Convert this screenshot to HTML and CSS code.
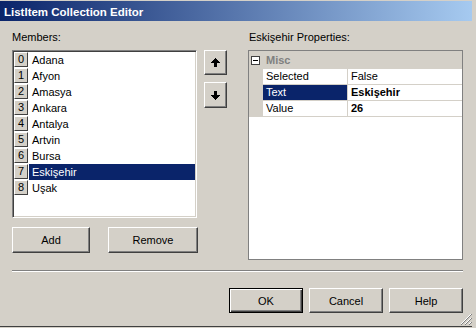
FILE: index.html
```html
<!DOCTYPE html>
<html lang="tr">
  <head>
    <meta charset="UTF-8" />
    <title>ListItem Collection Editor</title>
    <link rel="stylesheet" href="styles.css">
  </head>
  <body>
    <div class="window">
      <div class="titlebar">ListItem Collection Editor</div>
      <div class="content">
        <div class="panes">
          <div class="members">
            <div class="label">Members:</div>
            <div class="listbox">
              <div class="item"><span class="index">0</span><span class="name">Adana</span></div>
              <div class="item"><span class="index">1</span><span class="name">Afyon</span></div>
              <div class="item"><span class="index">2</span><span class="name">Amasya</span></div>
              <div class="item"><span class="index">3</span><span class="name">Ankara</span></div>
              <div class="item"><span class="index">4</span><span class="name">Antalya</span></div>
              <div class="item"><span class="index">5</span><span class="name">Artvin</span></div>
              <div class="item"><span class="index">6</span><span class="name">Bursa</span></div>
              <div class="item selected"><span class="index">7</span><span class="name">Eskişehir</span></div>
              <div class="item"><span class="index">8</span><span class="name">Uşak</span></div>
            </div>
            <div class="member-buttons">
              <button class="btn btn-add">Add</button>
              <button class="btn btn-remove">Remove</button>
            </div>
          </div>

          <div class="arrows">
            <button class="btn btn-arrow">
              <svg width="9" height="9" viewBox="0 0 9 9" shape-rendering="crispEdges"><path d="M4 0h1v1h1v1h1v1h1v1h1v1H6v4H3V5H0V4h1V3h1V2h1V1h1z" fill="#000"/></svg>
            </button>
            <button class="btn btn-arrow btn-down">
              <svg width="9" height="9" viewBox="0 0 9 9" shape-rendering="crispEdges"><path d="M3 0h3v4h3v1H8v1H7v1H6v1H5v1H4V8H3V7H2V6H1V5H0V4h3z" fill="#000"/></svg>
            </button>
          </div>

          <div class="properties">
            <div class="label">Eskişehir Properties:</div>
            <div class="grid">
              <div class="category">
                <svg class="toggle" width="9" height="9" viewBox="0 0 9 9" shape-rendering="crispEdges"><rect x="0.5" y="0.5" width="8" height="8" fill="#fff" stroke="#404040"/><path d="M2 4h5v1H2z" fill="#000"/></svg>
                Misc
              </div>
              <div class="prop"><span class="pname">Selected</span><span class="pvalue">False</span></div>
              <div class="prop selected"><span class="pname">Text</span><span class="pvalue bold">Eskişehir</span></div>
              <div class="prop"><span class="pname">Value</span><span class="pvalue bold">26</span></div>
            </div>
          </div>
        </div>

        <div class="separator"></div>

        <div class="footer">
          <button class="btn btn-dialog btn-default">OK</button>
          <button class="btn btn-dialog">Cancel</button>
          <button class="btn btn-dialog">Help</button>
        </div>
      </div>

      <svg class="grip" width="12" height="12" viewBox="0 0 12 12" shape-rendering="crispEdges">
        <path d="M11 1L1 11M11 5L5 11M11 9L9 11" stroke="#fff" stroke-width="1"/>
        <path d="M12 1L1 12M12 5L5 12M12 9L9 12" stroke="#808080" stroke-width="1.4"/>
      </svg>
    </div>
  </body>
</html>
```

FILE: styles.css
```css
* {
  box-sizing: border-box;
}
body {
  margin: 0;
  background-color: #d4d0c8;
  font-family: "Liberation Sans", Arial, sans-serif;
  font-size: 11px;
  color: #000;
}
.window {
  position: relative;
  width: 472px;
  height: 327px;
  border-top: 1px solid #d4d0c8;
  border-bottom: 1px solid #404040;
}
.titlebar {
  height: 20px;
  padding: 2px 0 0 4px;
  line-height: 18px;
  font-weight: bold;
  font-size: 11.5px;
  color: #fff;
  background: linear-gradient(to right, #0a246a, #a6caf0);
}
.content {
  padding: 10px 9px 0 12px;
}
.panes {
  display: flex;
  align-items: flex-start;
}
.members {
  width: 186px;
}
.label {
  height: 13px;
  line-height: 13px;
  margin-bottom: 6px;
}
.listbox {
  width: 185px;
  height: 168px;
  padding: 1px;
  background-color: #fff;
  border: 1px solid;
  border-color: #808080 #fff #fff #808080;
  box-shadow: inset 1px 1px #404040, inset -1px -1px #d4d0c8;
}
.item {
  display: flex;
  height: 16px;
}
.index {
  width: 14px;
  height: 15px;
  line-height: 13px;
  text-align: center;
  background-color: #d4d0c8;
  border: 1px solid;
  border-color: #fff #404040 #404040 #fff;
}
.item .name {
  flex: 1;
  margin-left: 1px;
  padding-left: 3px;
  line-height: 16px;
}
.item.selected .name {
  background-color: #0a246a;
  color: #fff;
}
.member-buttons {
  display: flex;
  justify-content: space-between;
  margin-top: 9px;
}
.btn {
  height: 26px;
  padding: 0;
  font: inherit;
  color: #000;
  background-color: #d4d0c8;
  border: 1px solid;
  border-color: #fff #404040 #404040 #fff;
  box-shadow: inset -1px -1px #808080;
}
.btn-add {
  width: 78px;
}
.btn-remove {
  width: 90px;
}
.arrows {
  display: flex;
  flex-direction: column;
  gap: 7px;
  margin-left: 6px;
  padding-top: 19px;
}
.btn-arrow {
  width: 23px;
  height: 25px;
  display: flex;
  align-items: center;
  justify-content: center;
}
.btn-down {
  height: 26px;
}
.properties {
  width: 215px;
  margin-left: 21px;
}
.properties .label {
  padding-left: 1px;
}
.grid {
  height: 210px;
  background-color: #fff;
  border: 1px solid #808080;
}
.category {
  display: flex;
  align-items: center;
  height: 18px;
  background-color: #d4d0c8;
  color: #808080;
  font-weight: bold;
}
.toggle {
  margin: 0 6px 0 2px;
}
.prop {
  display: flex;
  height: 16px;
  padding-left: 14px;
  background-color: #d4d0c8;
}
.pname,
.pvalue {
  line-height: 15px;
  padding-left: 3px;
  background-color: #fff;
  border-bottom: 1px solid #d4d0c8;
}
.pname {
  width: 85px;
  border-right: 1px solid #d4d0c8;
}
.pvalue {
  flex: 1;
}
.prop.selected .pname {
  background-color: #0a246a;
  color: #fff;
}
.bold {
  font-weight: bold;
}
.separator {
  height: 2px;
  margin-top: 10px;
  border-top: 1px solid #808080;
  border-bottom: 1px solid #fff;
}
.footer {
  display: flex;
  justify-content: flex-end;
  gap: 6px;
  margin-top: 16px;
}
.btn-dialog {
  width: 74px;
  height: 25px;
}
.btn-default {
  border: 1px solid #000;
  box-shadow: inset 1px 1px #fff, inset -1px -1px #404040, inset -2px -2px #808080;
}
.grip {
  position: absolute;
  right: 0;
  bottom: 1px;
}
```
